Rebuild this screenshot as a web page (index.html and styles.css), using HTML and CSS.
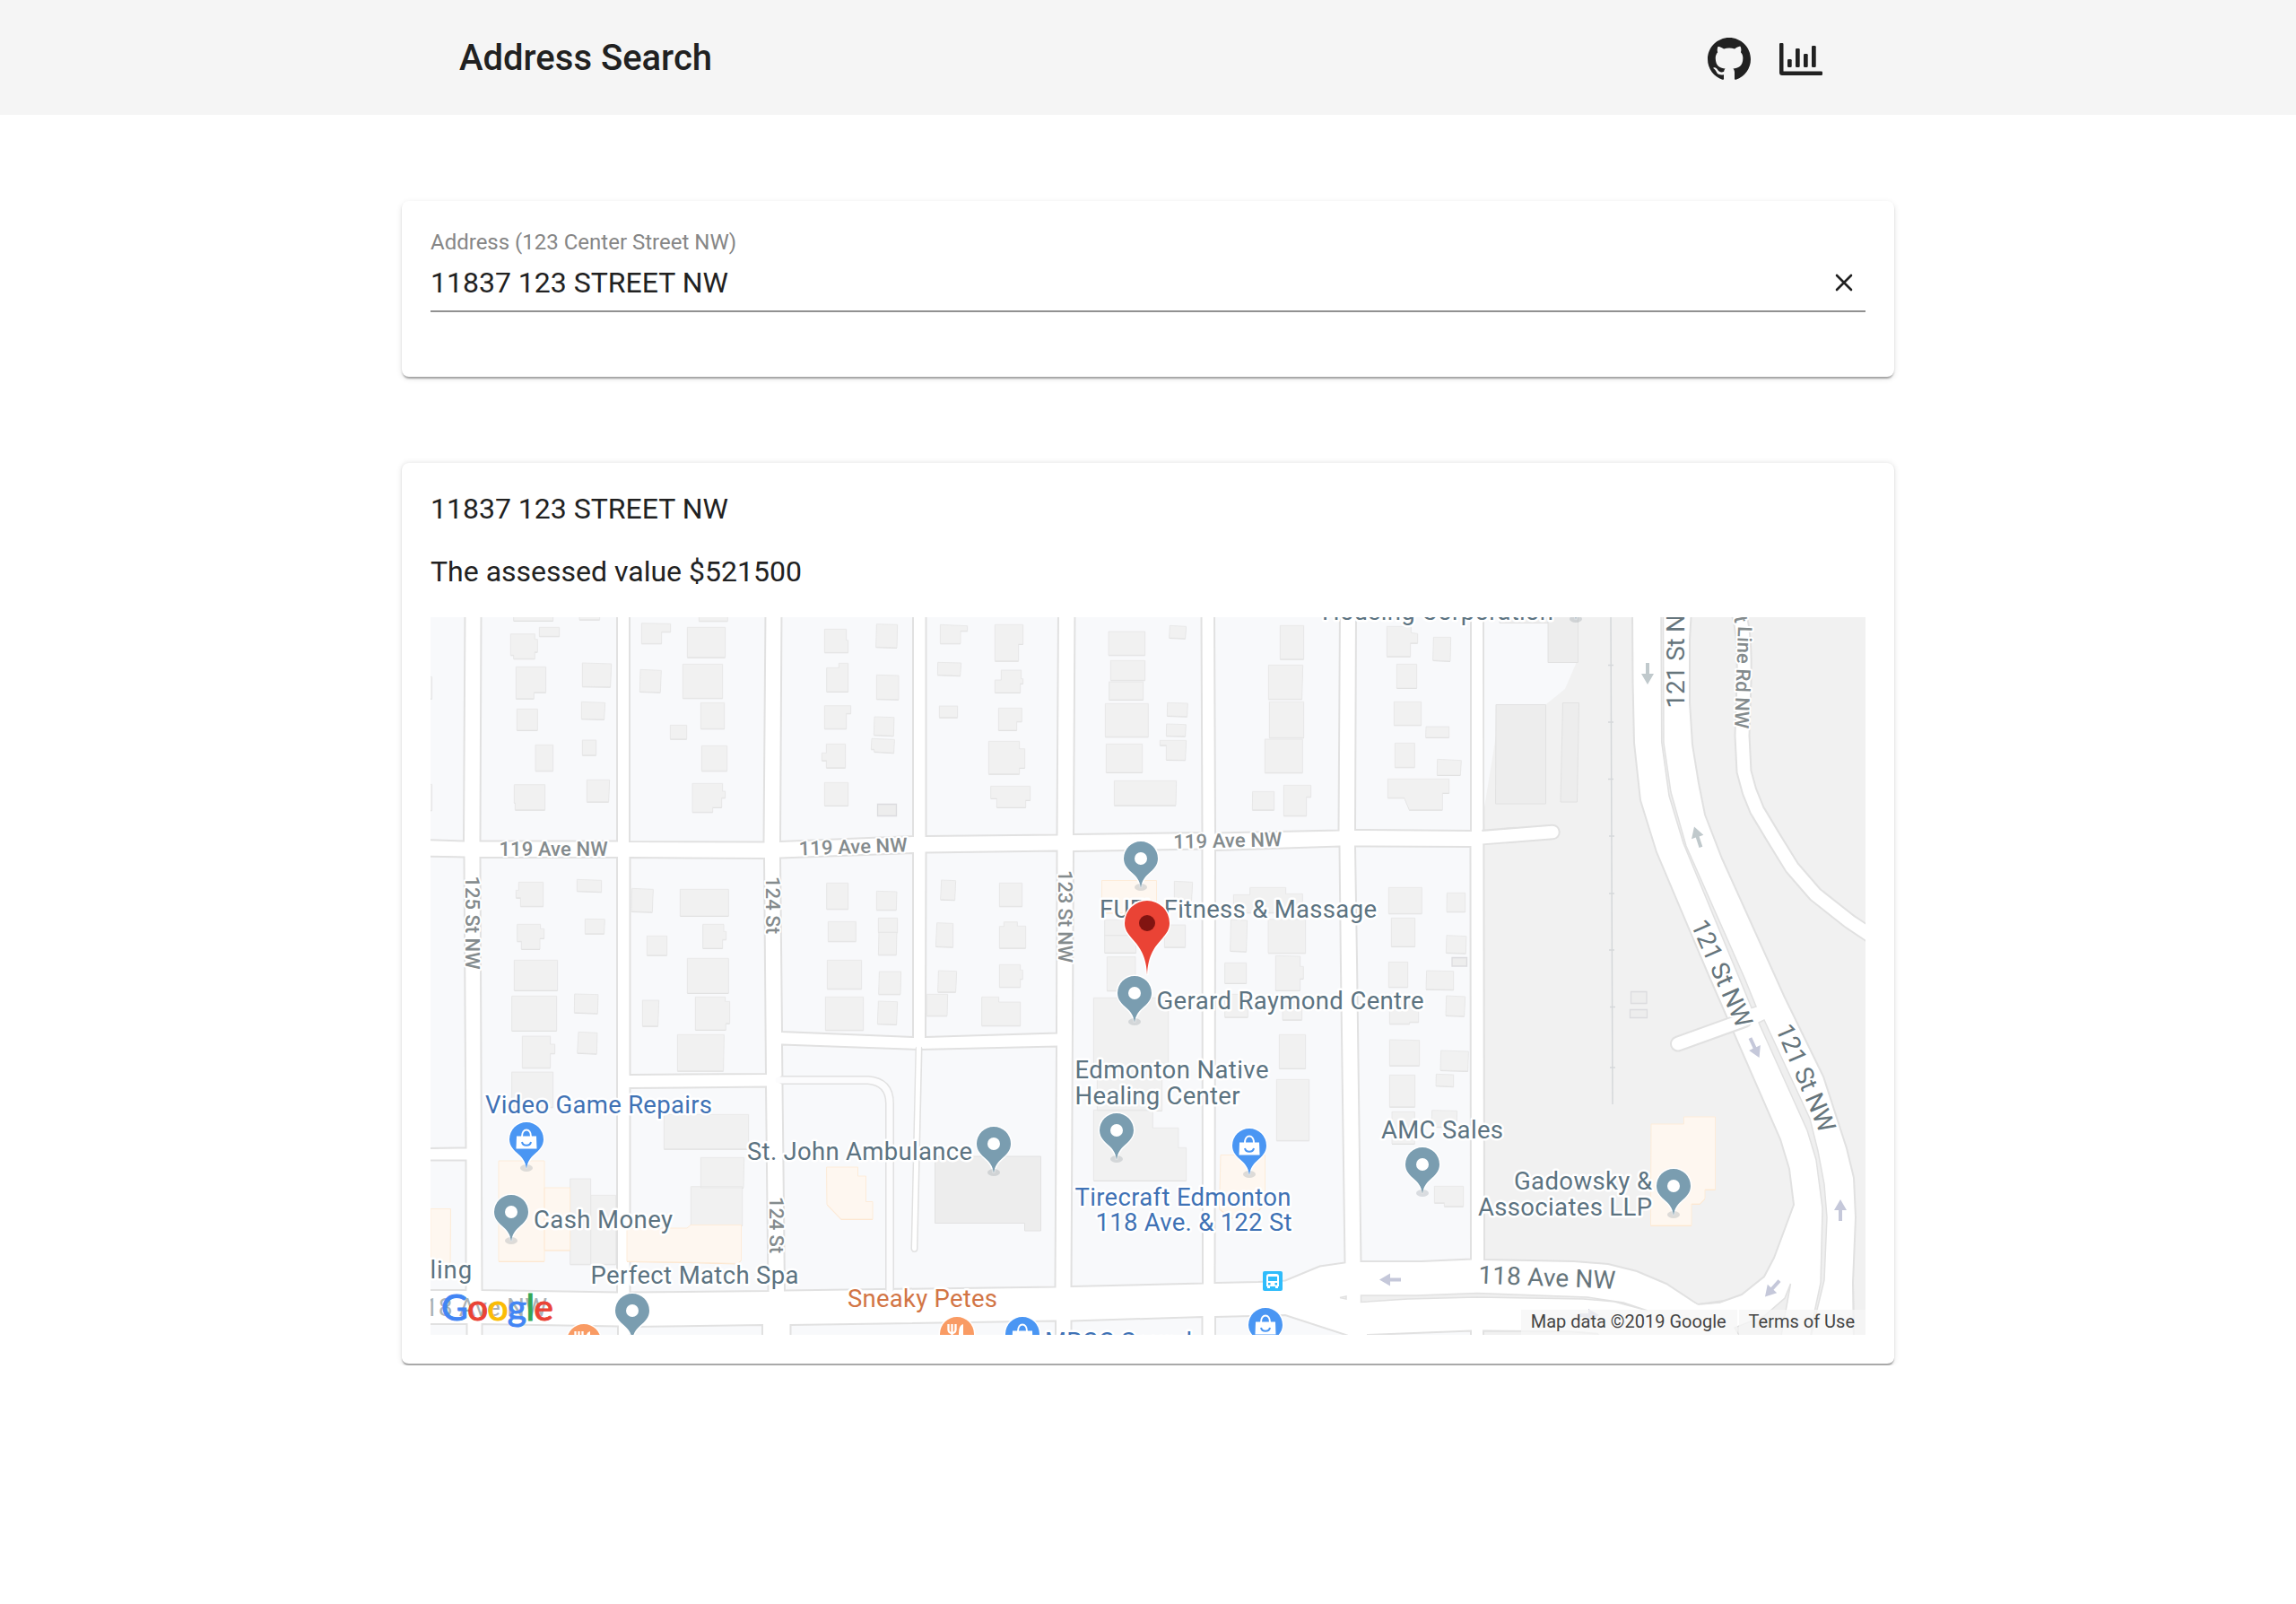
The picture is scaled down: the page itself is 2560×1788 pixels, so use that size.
FILE: index.html
```html
<!DOCTYPE html>
<html lang="en">
<head>
<meta charset="utf-8">
<title>Address Search</title>
<link rel="stylesheet" href="styles.css">
</head>
<body>
<header class="topbar">
  <div class="topbar-inner">
    <h1 class="title">Address Search</h1>
    <nav class="actions">
      <a class="action" aria-label="GitHub"><svg width="48" height="48" viewBox="0 0 16 16"><path d="M8 0C3.58 0 0 3.58 0 8c0 3.54 2.29 6.53 5.47 7.59.4.07.55-.17.55-.38 0-.19-.01-.82-.01-1.49-2.01.37-2.53-.49-2.69-.94-.09-.23-.48-.94-.82-1.13-.28-.15-.68-.52-.01-.53.63-.01 1.08.58 1.23.82.72 1.21 1.87.87 2.33.66.07-.52.28-.87.51-1.07-1.78-.2-3.64-.89-3.64-3.95 0-.87.31-1.59.82-2.15-.08-.2-.36-1.02.08-2.12 0 0 .67-.21 2.2.82.64-.18 1.32-.27 2-.27s1.36.09 2 .27c1.53-1.04 2.2-.82 2.2-.82.44 1.1.16 1.92.08 2.12.51.56.82 1.27.82 2.15 0 3.07-1.87 3.75-3.65 3.95.29.25.54.73.54 1.48 0 1.07-.01 1.93-.01 2.2 0 .21.15.46.55.38A8.01 8.01 0 0 0 16 8c0-4.42-3.58-8-8-8z"/></svg></a>
      <a class="action" aria-label="Statistics"><svg width="48" height="48" viewBox="0 0 48 48"><path d="M1.2 6h2.1q1.2 0 1.2 1.2v30.3h42.3q1.2 0 1.2 1.2v2.1q0 1.2-1.2 1.2H3q-3 0-3-3V7.200q0-1.200 1.200-1.200z"/><rect x="9" y="24" width="4.700" height="9" rx="1.200"/><rect x="18" y="12" width="4.700" height="21" rx="1.200"/><rect x="27" y="18" width="4.700" height="15" rx="1.200"/><rect x="36" y="9" width="4.700" height="24" rx="1.200"/></svg></a>
    </nav>
  </div>
</header>
<main class="content">
  <section class="card search-card">
    <label class="field-label" for="address">Address (123 Center Street NW)</label>
    <div class="field">
      <span class="field-value" id="address">11837 123 STREET NW</span>
      <svg class="clear" width="20" height="20" viewBox="0 0 20 20"><path d="M2 2l16 16M18 2L2 18"/></svg>
    </div>
  </section>
  <section class="card result-card">
    <p class="line">11837 123 STREET NW</p>
    <p class="line">The assessed value $521500</p>
    <div class="map">
      <svg class="map-canvas" viewBox="480 688 1600 800" width="1600" height="800">
        <defs>
          <path id="pin" d="M0 32.500C-1.200 25-4 21-8.500 17-14.500 12-19 7-19 0a19 19 0 0 1 38 0C19 7 14.500 12 8.500 17 4 21 1.200 25 0 32.500z"/>
          <g id="place"><use href="#pin" class="pin-halo"/><ellipse cy="32" rx="7" ry="4" class="pin-shadow"/><use href="#pin" class="slate"/><circle r="7" fill="#fff"/></g>
          <g id="bag"><path d="M-11-3.500h22l.5 14h-23z" fill="#fff"/><path d="M-5-3C-5-13 5-13 5-3" fill="none" stroke="#fff" stroke-width="2"/><path d="M-5 3C-4 8 4 8 5 3" fill="none" stroke="#4a96f3" stroke-width="2"/></g>
          <g id="shop"><use href="#pin" class="pin-halo"/><ellipse cy="32" rx="7" ry="4" class="pin-shadow"/><use href="#pin" class="blue"/><use href="#bag"/></g>
          <g id="food"><use href="#pin" class="pin-halo"/><use href="#pin" class="orange"/><path d="M-9.500-11v6q0 4 4 4v12M-5.500-11v9M-1.500-11v6q0 4-4 4" fill="none" stroke="#fff" stroke-width="2.300"/><path d="M7-11q-5 1-5 10v12h5z" fill="#fff"/></g>
          <path id="arrow" d="M0-12 7 0 2 0 2 12-2 12-2 0-7 0z"/>
          <g id="houses">
            <g transform="translate(470 680) scale(.33333)">
              <path d="M308 0H440V36H308zM528 0H596V32H528zM394 58H461V88H394zM298 80H379V98H388V140H379V163H308V151H298zM316 190H416V275H376V296H316zM319 331H388V402H319zM381 451H440V538H381zM310 584H413V668H313V645H310zM538 177L635 180 632 257 538 256zM535 307L614 310 611 366 535 364zM538 435H584V485H538zM553 568H629L626 641H553zM736 44L833 46V73H803V112H736zM889 58H1016V158H889zM928 0H1024V37H928zM874 181H1007V295H874zM732 199L802 202 799 275 730 273zM934 310H1013V397H934zM832 385H887V431H832zM937 454H1022V538H937zM906 580H1007V606H1016V628H1004V660H974V676H906zM0 223H35V296H0zM0 583H35V670H0z"/>
              <path d="M325 910H407V991H331V962H316V937H325zM520 901L602 904V943L520 940zM320 1051H398V1066H410V1098H396V1134H334V1108H320zM547 1033L613 1034 611 1082H547zM310 1171H455V1272H310zM704 931L775 934 772 1010 702 1008zM865 934H1027V1023H865zM754 1090H821V1154H754zM941 1051H1011V1075H1019V1102H1007V1131H941zM889 1165H1027V1281H889z"/>
            </g>
            <g transform="translate(870 680) scale(.33333)">
              <path d="M148 64H221V101H227V142H148zM155 193H196V178H227V273H155zM148 320H236V346H221V397H148zM154 448H218V527H154V503H139V478H154zM148 577H227V654H148zM322 47L392 49 390 126 320 124zM322 217L396 219V299L322 298zM315 357L381 359 379 421 313 418zM306 430L382 433 380 478 314 474V466H304zM535 49L626 53V70H603V112H535zM718 49H812V114H797V170H718zM527 175L605 177 602 220 526 217zM739 201H806V230H812V246H803V276H718V234H739zM532 321H593V359H532zM730 328H808V373H791V402H730zM697 439H800V464H818V528H800V548H697zM704 589H836V636H821V660H724V630H704zM1098 72H1220V151H1098zM1105 169H1220V235H1105zM1100 240H1214V300H1100zM1087 313H1231V424H1087zM1090 448H1211V543H1090zM1117 571H1325L1323 653H1117z"/>
              <path d="M155 913H227V1000H155zM322 940L390 942 388 1003H322zM160 1042H253V1108H160zM328 1030H392V1078H328zM330 1078H390L388 1153H328zM157 1171H272V1267H157zM331 1209H404L402 1285H329zM539 903L587 905 584 970 536 968zM733 913H809V991H733zM524 1046L578 1048V1127L520 1125zM748 1043H793V1057H821V1130H733V1058H748zM529 1206L590 1208 587 1277H527zM733 1186H803V1204H811V1234H803V1261H733zM1085 1036H1180V1088H1085zM1085 1088H1190V1146H1085zM1093 1160H1188V1273H1093z"/>
            </g>
            <g transform="translate(1270 680) scale(.33333)">
              <path d="M103 52L158 55 155 95 101 93zM472 52H551V164H472zM433 184H548L545 298H433zM436 307H551V427H436zM421 432H547V544H421zM95 310L163 312 161 356 94 354zM92 381L157 383 155 422 91 421zM70 436H158L155 502 91 501V452H70zM380 607H452V668H379zM484 586H575V625H560V688H484zM829 55H910V76L932 79V110H908V155H829zM985 91H1043L1041 171 983 168zM862 181H929V261H862zM853 307H944V385H853zM960 390H1037V426H959zM856 445H922V526H856zM998 499L1078 503 1075 552H997zM832 565H1037V612H1015V668H904L887 628H832z"/>
              <path d="M118 907L179 910 176 970 118 968zM316 952H371V928H491V949H547V1012H316zM307 1036L362 1038 359 1142 305 1140zM432 1034H557V1147H432zM85 1053H155V1127H85zM287 1180H359V1248H287zM457 1156L539 1158V1192H550V1233H539V1272H457zM835 928H946V1015H835zM1030 946H1091V1009H1029zM844 1030H923V1125H844zM1029 1088L1095 1091 1093 1148 1027 1146zM835 1177H899V1261H835zM962 1206L1052 1208V1270L960 1268z"/>
            </g>
            <g transform="translate(470 1080) scale(.33333)">
              <path d="M302 91H452V207H302zM337 225H431V252H446V283H431V331H337zM512 84L591 86 589 149 511 146zM525 211L588 214 586 284 521 281zM302 345H440V463H302zM739 105H794L791 191H739zM916 94H1016V109H1031V182H1018V204H916zM856 220H1012L1010 341H856zM811 487H1094V602H811zM934 631H1079L1077 732H934zM901 728H1073V858H901zM497 702H566V988H497zM566 757H650V988H566z"/>
            </g>
            <g transform="translate(870 1080) scale(.33333)">
              <path d="M151 94H278V205H151zM328 108L392 110 389 186 325 184zM490 85H560L558 157H490zM674 94H731V111H803V190H674zM1048 97H1298V330H1277V474H1060V330H1048zM1048 472H1246V532H1332V598H1358V708H1048z"/>
            </g>
            <g transform="translate(1270 1080) scale(.33333)">
              <path d="M287 85H364V161H287zM480 110H545V170H480zM469 220H557V333H469zM460 370H569V574H460zM838 100H935V178H905V184H838zM838 237L938 239V323H838zM838 355H923V461H838zM846 478H922V585H846zM1028 90L1091 93 1088 158 1026 156zM1010 273L1102 276 1100 342 1008 339zM994 352L1052 354V394L993 391zM980 473L1064 475 1062 530 978 528zM988 727H1085V794H1021V782H988z"/>
            </g>
          </g>
          <g id="shops">
            <path d="M480 1347.500h22.500l-.5 62H480zM556 1294h51v112h-51zM607 1324h28.500v69.500H607zM699 1369h67l4-3.500h56.500v39l-4 4L767 1407l-68-1zM921.500 1301h35v10h9v28.500h7.500v19.500H938l-16-16.500zM1228.500 981.500h61v36h-61zM1361 1287.500h49.500v55l-9 8-12 7h-17l-13-10zM1841 1253h36.500v-8h35v81h-11.500v10l-6 6h-9v24h-45.500z"/>
          </g>
        </defs>

        <!-- city blocks -->
        <g class="block">
          <path d="M470 680H518.500L517 937.500 470 936zM536.500 680H688V937.500H535.500zM702 680H853.500L851.500 938.500 702 938zM871.500 680H1018V932L870 938zM1032.500 680H1180L1178.500 930.500 1032.500 932zM1198.500 680H1339.500L1340.500 928 1197 930zM1354 680H1494L1492.500 925.500 1355 928.500zM1512 680H1640V926L1511 925z"/>
          <path d="M470 954.500L517.500 955.500 519.500 1279.500 470 1280zM470 1293.500H519.500V1438H470zM535.500 956H688V1440.500L537.500 1438zM702.500 956L852 957 854 1197 702.500 1198zM702.500 1213L854 1211.500 856.500 1439 702.500 1440.500zM870 956.500L1018 951V1156L872 1150zM1032.500 950.500L1178.500 948.500 1178 1151.500 1032 1156zM872 1164.500L1025 1170 1178 1166.500 1176.500 1434.500 875 1438.500zM1197 949L1340.500 946.500 1341 1430.500 1194.500 1434zM1355 948L1493.500 943.500 1495 1080 1499.500 1407.500 1471.500 1411.500 1433 1427.500 1403 1429 1354.500 1430zM1511 943.500L1639.500 944 1640 1403.500 1585 1406H1517.500L1513 1070z"/>
          <path d="M470 1476H520.500V1500H470zM537.500 1476L689 1478.500V1500H537.500zM702.500 1479L850 1477V1500H702.500zM881.500 1477L1177 1472.500V1500H881.500zM1194.500 1472.500L1340.500 1468V1500H1194.500zM1355 1468L1433 1466 1502 1488.500V1500H1355zM1525 1488L1640 1483.500V1500H1525z"/>
        </g>
        <g class="industrial">
          <path d="M1654 680H2090V1500H2067L2066 1430 1893 1454 1858 1431 1825 1417 1793 1409 1755 1406 1655 1404z"/>
          <path d="M1654 1483.500L1750 1484 1793 1488V1500H1654z"/>
        </g>
        <path fill="#f8f9fb" d="M1655 680H1757V740L1745 768 1724 785H1668V820L1655 900z"/>
        <g class="yard"><path d="M1668 785.500H1723.500V896H1667.500zM1726 680H1759.500V738.500H1726zM1672 680H1726V694.500H1672zM1742.500 783.500H1760.500L1758.500 894H1740z"/></g>

        <!-- 118 Ave and 121 St carriageways -->
        <path class="road-area" d="M1820 680L1820.500 760 1822 828 1829 892 1847 950 1905 1087 1985 1270 1995 1303 2000 1343 1978 1402 1967 1423 1942 1443 1917 1452 1893 1454 1855 1500H2067L2066 1430 2069 1357 2067 1313 2059 1280 2033 1200 1990 1112 1920 957 1901 908 1894 873 1887 830 1884 783V713L1886 680z"/>
        <path fill="#fff" d="M1795 1411L1895 1455.500 1917 1453 1935 1500H1793L1780 1484 1655 1482V1406z"/>
        <g class="median">
          <path d="M1852 680L1852.700 827 1861 887 1877 940 1953 1123.500 1958 1122 1945 1090 1880 943 1863 883 1855 828 1854.500 680z"/>
          <path d="M1961 1140L1967 1137 2018 1247 2027 1283 2034 1320 2037 1357 2034 1427 2026 1460 2018 1495 2023 1463 2030 1430 2032 1347 2025 1293 2015 1260z"/>
          <path d="M1996.500 1431L1990 1447 1967 1467 1934 1480 1943 1495H1985z"/>
          <path d="M1517.500 1444H1580L1647 1441.500 1770 1446 1810 1452 1837 1461 1800 1451 1765 1448 1647 1446 1570 1448 1517.500 1451.500z"/>
          <path d="M1494 1446.500L1501 1445V1448z"/>
        </g>
        <g class="casing"><path stroke-width="18" d="M1937 680Q1946 700 1944.500 760L1942.500 820 1944.500 860 1950.500 882 1959 903 1977 933 1998 967 2024 997 2062 1027 2086 1043M1871 1163.500L1945 1137"/><path stroke-width="17.500" stroke-linecap="butt" d="M1653 933.500L1690 930.500"/><path stroke-width="17.500" d="M1680 931.500L1731 927.500"/><path stroke-width="8" d="M1024.500 1170L1019.500 1392"/><path stroke-width="10" d="M873 1204H968Q992 1206 992 1230V1436"/></g>
        <g class="casing inner"><path stroke-width="14" d="M1937 680Q1946 700 1944.500 760L1942.500 820 1944.500 860 1950.500 882 1959 903 1977 933 1998 967 2024 997 2062 1027 2086 1043M1871 1163.500L1950 1135"/><path stroke-width="13.500" d="M1649 934L1731 927.500"/><path stroke-width="5" d="M1024.500 1165L1019.500 1392"/><path stroke="#fcfcfd" stroke-width="7" d="M868 1204H968Q992 1206 992 1230V1440"/></g>

        <!-- rail line -->
        <path class="rail" d="M1796 680L1798 1231M1793 741.500h6M1793 805h6M1793 868.500h6M1794 932h6M1794 996h6M1794 1059h6M1795 1122.500h6M1795 1190h6"/>

        <!-- buildings -->
        <use href="#houses" y="1" fill="#e0e0e0"/>
        <use href="#houses" class="house"/>
        <path class="yard" d="M1042.500 1289H1160.500V1372H1142.500V1363.500H1042.500z"/>
        <path class="shed" d="M978.500 896.500h21v13h-21zM1619 1067.500h16.500v9.500H1619zM1818.500 1105.500h17.500v13h-17.500zM1817.500 1125.500h19v9h-19z"/>
        <use href="#shops" y="1" fill="#fde3c8"/>
        <use href="#shops" class="store"/>

        <!-- traffic direction -->
        <g fill="#c0c9cc"><use href="#arrow" transform="translate(1837 751) rotate(180)"/><use href="#arrow" transform="translate(1892.700 933) rotate(-18)"/></g>
        <g fill="#c5c8da"><use href="#arrow" transform="translate(1956.500 1168) rotate(155)"/><use href="#arrow" transform="translate(2052 1349)"/><use href="#arrow" transform="translate(1976 1436.500) rotate(222)"/><use href="#arrow" transform="translate(1550 1426.500) rotate(-90)"/><use href="#arrow" transform="translate(1771 1466) rotate(90)"/></g>

        <!-- street names -->
        <g class="street">
          <text x="556.500" y="954" textLength="121">119 Ave NW</text>
          <text transform="translate(891 953.500) rotate(-2)" textLength="121">119 Ave NW</text>
          <text transform="translate(1308.500 946) rotate(-1.400)" textLength="121">119 Ave NW</text>
          <text transform="translate(519 976.500) rotate(90)" textLength="104">125 St NW</text>
          <text transform="translate(854 977) rotate(90)" textLength="64">124 St</text>
          <text transform="translate(1180 970) rotate(90)" textLength="103">123 St NW</text>
          <text transform="translate(857.500 1334) rotate(90)" textLength="63">124 St</text>
          <text transform="translate(1933 688) rotate(78)">t</text>
          <text transform="translate(1938 698) rotate(92)" textLength="114">Line Rd NW</text>
        </g>
        <g class="arterial">
          <text transform="translate(1878 789.500) rotate(-90)" textLength="129">121 St NW</text>
          <text transform="translate(1885 1030.500) rotate(66)" textLength="128">121 St NW</text>
          <text transform="translate(1979.500 1146.500) rotate(67)" textLength="128">121 St NW</text>
          <text transform="translate(1648 1430.500) rotate(2.300)" textLength="153">118 Ave NW</text>
          <text x="457" y="1467" textLength="153" opacity=".55">118 Ave NW</text>
        </g>

        <!-- places -->
        <use href="#place" x="1272" y="957"/><use href="#place" x="1265" y="1107"/><use href="#place" x="1245" y="1260"/><use href="#place" x="1108" y="1275"/><use href="#place" x="1586" y="1298"/><use href="#place" x="1866" y="1322"/><use href="#place" x="570" y="1351"/><use href="#place" x="705" y="1461"/><use href="#place" x="1757" y="658"/>
        <use href="#shop" x="587" y="1270"/><use href="#shop" x="1393" y="1277"/><use href="#shop" x="1411" y="1477"/><use href="#shop" x="1140" y="1487"/>
        <use href="#food" x="1067" y="1487"/><use href="#food" x="651" y="1495"/>
        <g class="poi">
          <text x="1474" y="690.500" textLength="258">Housing Corporation</text>
          <text x="1226" y="1023" textLength="309">FUEL Fitness &amp; Massage</text>
          <text x="1289.500" y="1125" textLength="298">Gerard Raymond Centre</text>
          <text x="1198.500" y="1202" textLength="216">Edmonton Native</text>
          <text x="1198.500" y="1230.500" textLength="184">Healing Center</text>
          <text x="833" y="1293" textLength="251">St. John Ambulance</text>
          <text x="1540" y="1268.500" textLength="136">AMC Sales</text>
          <text x="1688" y="1326" textLength="154">Gadowsky &amp;</text>
          <text x="1648" y="1354.500" textLength="194">Associates LLP</text>
          <text x="595" y="1369" textLength="155">Cash Money</text>
          <text x="658.500" y="1431" textLength="232">Perfect Match Spa</text>
          <text x="527" y="1425" text-anchor="end" letter-spacing=".9">cycling</text>
          <g fill="#3f72b5"><text x="541" y="1240.500" textLength="253">Video Game Repairs</text><text x="1198.500" y="1343.500" textLength="241">Tirecraft Edmonton</text><text x="1221.500" y="1371.500" textLength="219">118 Ave. &amp; 122 St</text><text x="1165" y="1505" textLength="164">MRCC Sound</text></g>
          <text x="945" y="1457" textLength="167" fill="#d27545">Sneaky Petes</text>
        </g>

        <!-- transit stop -->
        <g transform="translate(1408 1417)"><rect width="22" height="22" rx="2" fill="#2fbcfb"/><path fill="#fff" d="M4 6q0-3 3-3h8q3 0 3 3v11h-1v2h-3v-2H8v2H5v-2H4z"/><path fill="#2fbcfb" d="M6 6h10v5H6zM6 13h2.500v2.500H6zM13.500 13H16v2.500h-2.500z"/></g>

        <!-- selected address -->
        <path d="M1279 1087C1278 1064 1270 1055 1262 1046 1257 1040 1254 1036 1254 1029a25 25 0 0 1 50 0C1304 1036 1301 1040 1296 1046 1288 1055 1280 1064 1279 1087z" fill="#ea4335" stroke="#fff" stroke-width="3" paint-order="stroke"/><circle cx="1279" cy="1029" r="9" fill="#811411"/>

        <g class="brand"><text x="492" y="1472" textLength="125"><tspan fill="#4285f4" stroke="#4285f4">G</tspan><tspan fill="#ea4335" stroke="#ea4335">o</tspan><tspan fill="#fbbc05" stroke="#fbbc05">o</tspan><tspan fill="#4285f4" stroke="#4285f4">g</tspan><tspan fill="#34a853" stroke="#34a853">l</tspan><tspan fill="#ea4335" stroke="#ea4335">e</tspan></text></g>
      </svg>
      <div class="attribution"><span class="credit">Map data ©2019 Google</span><span class="credit">Terms of Use</span></div>
    </div>
  </section>
</main>
</body>
</html>
```
FILE: styles.css
```css
* { box-sizing: border-box; }
body { margin: 0; background: #fff; color: #212121; font-family: Roboto, sans-serif; }
.topbar { height: 128px; background: #f5f5f5; }
.topbar-inner { width: 1664px; height: 128px; margin: 0 auto; padding: 0 80px 0 64px; display: flex; justify-content: space-between; align-items: center; }
.title { margin: 0; padding-top: 2px; font-size: 40px; line-height: 64px; font-weight: 500; }
.actions { display: flex; gap: 32px; padding-top: 4px; }
.action { display: block; width: 48px; height: 48px; fill: #212121; }
.action svg { display: block; }
.content { width: 1664px; margin: 96px auto 0; display: flex; flex-direction: column; gap: 96px; }
.card { background: #fff; border-radius: 8px; padding: 32px; box-shadow: 0 4px 2px -2px rgba(0,0,0,.2), 0 2px 2px rgba(0,0,0,.14), 0 2px 6px rgba(0,0,0,.12); }
.search-card { height: 196px; }
.field-label { display: block; font-size: 24px; line-height: 28px; color: #868686; }
.field { height: 64px; display: flex; align-items: center; justify-content: space-between; padding-right: 14px; border-bottom: 2px solid #919191; }
.field-value { font-size: 32px; line-height: 40px; }
.clear { fill: none; stroke: #212121; stroke-width: 2.6; stroke-linecap: round; }
.result-card { height: 1006px; padding-top: 31px; border-bottom: 2px solid #a9a9a9; box-shadow: 0 1px 2px rgba(0,0,0,.14), 0 0 6px rgba(0,0,0,.12); }
.line { margin: 0 0 30px; font-size: 32px; line-height: 40px; }
.line + .line { margin-bottom: 31px; }
.map { position: relative; width: 1600px; height: 800px; overflow: hidden; background: #fff; }
.map-canvas { display: block; }
.block { fill: #f8f9fb; stroke: #e1e1e1; stroke-width: 2; }
.industrial { fill: #f1f1f1; stroke: #e1e1e1; stroke-width: 2; }
.yard { fill: #ededed; stroke: #e2e2e2; stroke-width: 1; }
.road-area { fill: #fff; stroke: #e1e1e1; stroke-width: 2; }
.median { fill: #efefef; stroke: #e1e1e1; stroke-width: 1.5; }
.casing { fill: none; stroke: #e1e1e1; stroke-linecap: round; stroke-linejoin: round; }
.inner { stroke: #fff; }
.rail { fill: none; stroke: #d5d8da; stroke-width: 1.5; }
.house { fill: #f1f1f1; stroke: #e6e6e6; stroke-width: 2.4; }
.shed { fill: #ededed; stroke: #dcdcdf; stroke-width: 1.3; }
.store { fill: #fef7f0; stroke: #fdecd9; stroke-width: 1; }
.pin-halo { fill: #fff; stroke: #fff; stroke-width: 3; }
.slate { fill: #7a9db0; }
.blue { fill: #4a96f3; }
.orange { fill: #f99b64; }
.pin-shadow { fill: #7b8790; opacity: .25; }
.street { font-size: 22px; font-weight: 500; fill: #848b8d; stroke: #fff; stroke-width: 4; stroke-linejoin: round; paint-order: stroke; }
.arterial { font-size: 28px; fill: #66757c; stroke: #fff; stroke-width: 4; stroke-linejoin: round; paint-order: stroke; }
.poi { font-size: 27.5px; fill: #5c7381; stroke: #fff; stroke-width: 5; stroke-linejoin: round; paint-order: stroke; }
.brand { font-family: Lato, sans-serif; font-size: 41px; font-weight: 400; stroke-width: 1; }
.attribution { position: absolute; right: 0; bottom: 0; display: flex; gap: 2px; height: 28px; }
.credit { padding: 0 12px 0 11px; font-size: 20px; line-height: 27px; color: #444; background: rgba(245,245,245,.75); white-space: nowrap; }
```
